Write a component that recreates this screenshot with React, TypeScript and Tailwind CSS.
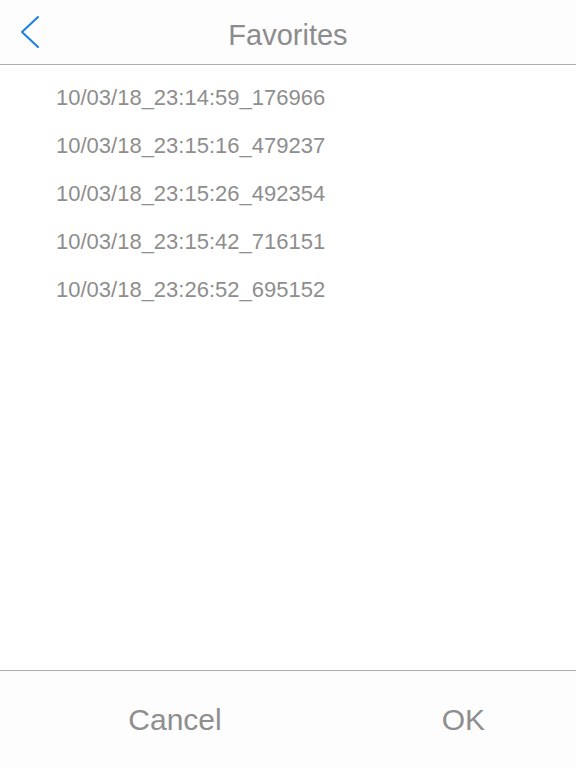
import React from "react";

const entries = [
  "10/03/18_23:14:59_176966",
  "10/03/18_23:15:16_479237",
  "10/03/18_23:15:26_492354",
  "10/03/18_23:15:42_716151",
  "10/03/18_23:26:52_695152",
];

const App: React.FC = () => {
  return (
    <div className="flex h-[768px] w-[576px] flex-col bg-white font-['Liberation_Sans',Arial,sans-serif]">
      {/* Header */}
      <div className="relative flex h-[65px] items-center justify-center border-b border-[#aeaeae] bg-[#fdfdfd] pt-[6px]">
        <button className="absolute left-[18px] top-[14px] p-0">
          <svg width="24" height="36" viewBox="0 0 24 36" fill="none">
            <path d="M20 3 L4 18 L20 33" stroke="#1a7fe0" strokeWidth="2" strokeLinecap="round" strokeLinejoin="round" />
          </svg>
        </button>
        <h1 className="text-[29px] leading-none text-[#8c8c8c]">Favorites</h1>
      </div>

      {/* List */}
      <ul className="flex-1 pt-[8px]">
        {entries.map((item) => (
          <li key={item} className="flex h-[48px] items-center pl-[56px] text-[22px] text-[#8e8e8e]">
            {item}
          </li>
        ))}
      </ul>

      {/* Footer */}
      <div className="grid h-[98px] grid-cols-2 border-t border-[#aeaeae] bg-[#fdfdfd]">
        <button className="text-[30px] text-[#8e8e8e] pl-[62px]">Cancel</button>
        <button className="text-[30px] text-[#8e8e8e] pr-[91px] text-right">OK</button>
      </div>
    </div>
  );
};

export default App;
